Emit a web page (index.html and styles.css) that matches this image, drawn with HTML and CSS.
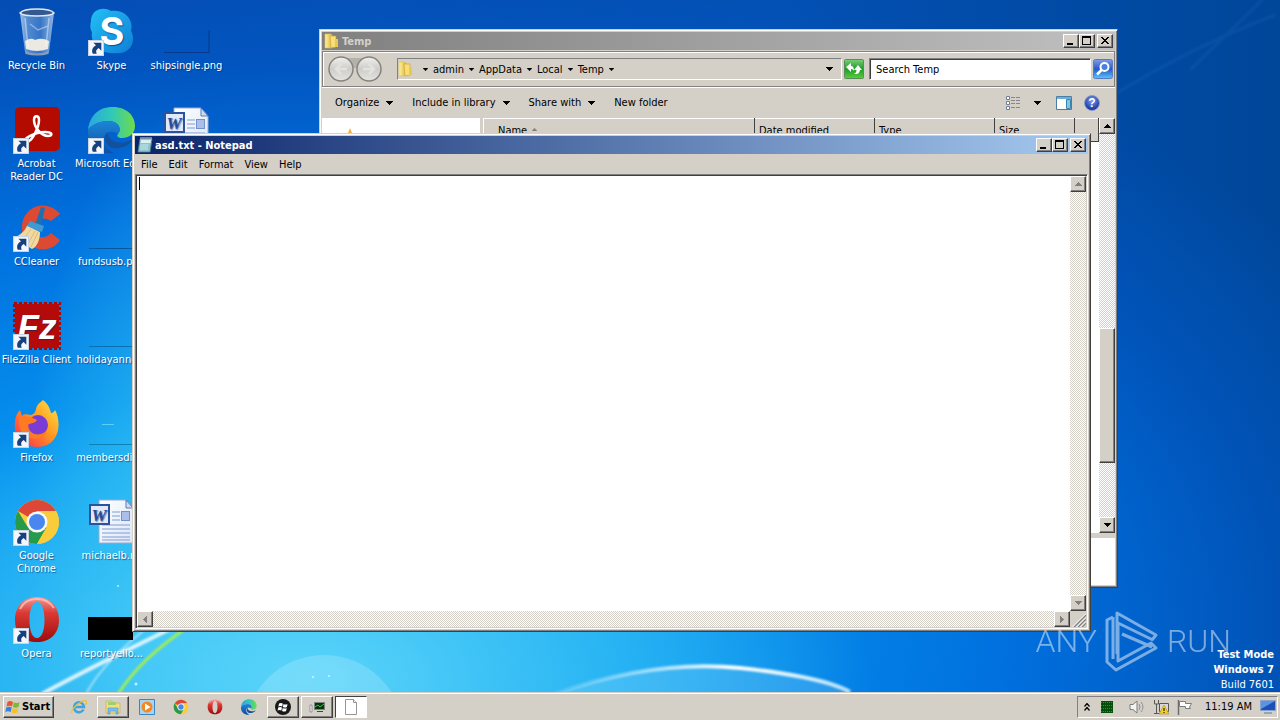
FILE: index.html
```html
<!DOCTYPE html>
<html lang="en">
<head>
<meta charset="utf-8">
<title>asd.txt - Notepad</title>
<link rel="stylesheet" href="styles.css">
</head>
<body>
<svg class="defs" aria-hidden="true">
  <defs>
    <linearGradient id="gGlass" x1="0" x2="1"><stop offset="0" stop-color="#b9d3ee"/><stop offset=".25" stop-color="#5c93d6"/><stop offset=".6" stop-color="#3f7bc8"/><stop offset="1" stop-color="#a9c9ec"/></linearGradient>
    <linearGradient id="gSkype" x1="0" y1="0" x2="1" y2="1"><stop offset="0" stop-color="#22c0f5"/><stop offset="1" stop-color="#0f7fd6"/></linearGradient>
    <linearGradient id="gEdge" x1="0" y1="0" x2="1" y2="0"><stop offset="0" stop-color="#2aa7e0"/><stop offset=".5" stop-color="#30c8b8"/><stop offset="1" stop-color="#6fdc4a"/></linearGradient>
    <linearGradient id="gEdge2" x1="0" y1="0" x2="0" y2="1"><stop offset="0" stop-color="#1c86d8"/><stop offset="1" stop-color="#0f4fa0"/></linearGradient>
    <linearGradient id="gFire" x1="1" y1="0" x2="0" y2="1"><stop offset="0" stop-color="#ffe84a"/><stop offset=".45" stop-color="#ff9a20"/><stop offset=".8" stop-color="#ff4a45"/><stop offset="1" stop-color="#e8258a"/></linearGradient>
    <linearGradient id="gOpera" x1="0" y1="0" x2="0" y2="1"><stop offset="0" stop-color="#f49a94"/><stop offset=".35" stop-color="#dc3a34"/><stop offset="1" stop-color="#9c0c0c"/></linearGradient>
    <linearGradient id="gFolder" x1="0" x2="1"><stop offset="0" stop-color="#fff3a0"/><stop offset="1" stop-color="#dcb638"/></linearGradient>
    <linearGradient id="gBall" x1="0" y1="0" x2="0" y2="1"><stop offset="0" stop-color="#f0f0ee"/><stop offset=".5" stop-color="#cfcdc9"/><stop offset="1" stop-color="#e6e4e0"/></linearGradient>
    <linearGradient id="gGreen" x1="0" y1="0" x2="0" y2="1"><stop offset="0" stop-color="#7ccf78"/><stop offset=".5" stop-color="#1f9a28"/><stop offset="1" stop-color="#58d03c"/></linearGradient>
    <linearGradient id="gBlue" x1="0" y1="0" x2="0" y2="1"><stop offset="0" stop-color="#7f9fe8"/><stop offset=".5" stop-color="#2458c8"/><stop offset="1" stop-color="#58c8f8"/></linearGradient>
    <linearGradient id="gPage" x1="0" y1="0" x2="1" y2="1"><stop offset="0" stop-color="#ffffff"/><stop offset="1" stop-color="#dbe6f8"/></linearGradient>
    <radialGradient id="gHelp" cx=".5" cy=".35" r=".6"><stop offset="0" stop-color="#7d9ff0"/><stop offset="1" stop-color="#17339c"/></radialGradient>
    <linearGradient id="gArc" x1="0" x2="1"><stop offset="0" stop-color="#bfeaff" stop-opacity=".2"/><stop offset=".6" stop-color="#fff"/><stop offset="1" stop-color="#dff6ff" stop-opacity=".8"/></linearGradient>
    <filter id="soft" x="-20%" y="-20%" width="140%" height="140%"><feGaussianBlur stdDeviation="1"/></filter>
  </defs>
  <symbol id="shortcut" viewBox="0 0 15 15"><rect width="15" height="15" fill="#c8d4e4"/><rect x="1" y="1" width="13" height="13" fill="#f4f7fb"/><path d="M5 2.500h7.500V10L10 7.600C7.700 9 7 10.500 8.200 13H4.500C3 9.500 4.500 6.500 7.500 5z" fill="#17407c"/></symbol>
  <symbol id="word" viewBox="0 0 48 48"><path d="M11 2h27l7 8v35H11z" fill="url(#gPage)" stroke="#9aaccc"/><path d="M38 2v8h7z" fill="#cfdcf0" stroke="#5c7cb8"/><path d="M24 14h8M24 18h8M24 22h8M14 27h28M14 31h28M14 35h28M14 39h28M14 42h28" stroke="#7f9dd4"/><rect x="33.500" y="13.500" width="8" height="9" fill="#a9bfe8" stroke="#7390cc"/><rect x="2" y="7" width="19" height="19" fill="#dfe9fa" stroke="#2b539c" stroke-width="2"/><text x="11" y="23" text-anchor="middle" class="word-letter">W</text></symbol>
  <symbol id="chrome" viewBox="0 0 48 48"><circle cx="24" cy="24" r="22" fill="#f9cc3c"/><path d="M24 24 5 13A22 22 0 0 1 43 13H24z" fill="#dd4738"/><path d="M5 13A22 22 0 0 0 24 46L33.500 29.500 24 24 14 28z" fill="#279a4c"/><path d="M24 13h19A22 22 0 0 1 24 46l9.500-16.500z" fill="#f9cc3c"/><circle cx="24" cy="24" r="10.500" fill="#f8f8f8"/><circle cx="24" cy="24" r="8" fill="#4886f0"/></symbol>
  <symbol id="opera" viewBox="0 0 48 48"><path fill-rule="evenodd" d="M24 1C37 1 46 10 46 24S37 46 24 46 2 38 2 24 11 1 24 1zM24 6c-5 0-7.500 8-7.500 18S19 42 24 42s7.500-8 7.500-18S29 6 24 6z" fill="url(#gOpera)"/><path d="M7 13C11 5 17 3 24 3s13 3 17 9" stroke="#ffd0c8" stroke-opacity=".7" stroke-width="2" fill="none"/></symbol>
  <symbol id="edge" viewBox="0 0 48 48"><path d="M0 24C2 8 12 1 25 1c14 0 22 9 22 19 0 8-6 12-13 12-4 0-6-2-4-4 5-6-1-13-9-13C10 15 2 20 0 24z" fill="url(#gEdge)"/><path d="M0 24c3-5 11-9 21-9 8 0 14 7 9 13-10-7-19 3-12 13 2 3 5 5 8 6C10 49-1 39 0 24z" fill="url(#gEdge2)"/><path d="M19 26c-6 10 4 20 16 15 4-1 7-4 8-5 1-1 0-2-2-1-11 5-21-1-22-9z" fill="#14509c"/></symbol>
  <symbol id="folder" viewBox="0 0 16 16"><path d="M1 1h6l1 1v13H1z" fill="url(#gFolder)" stroke="#e0c050" stroke-width=".6"/><path d="M6 3h6v11l-5 1z" fill="#f7df78" stroke="#c8a030" stroke-width=".6"/><path d="M11 6h3v8h-3z" fill="#e8c850"/></symbol>
  <symbol id="flag4" viewBox="0 0 16 16"><path d="M2.500 3C4.500 1.500 6 2 8 3L7 7.500C5 6.500 3.500 6.500 1.500 7.500z" fill="#e8562c"/><path d="M8.800 3.200c2 1 3.500 1 5.700 0l-1 4.800c-2 1-3.500 1-5.600 0z" fill="#7cb83c"/><path d="M1.300 8.500c2-1 3.500-1 5.400 0l-1 4.500c-2-1-3.500-1-5.400 0z" fill="#3c80d8"/><path d="M7.700 8.900c2 1 3.500 1 5.600 0l-1 4.500c-2 1-3.500 1-5.600 0z" fill="#f8c020"/></symbol>
  <symbol id="up" viewBox="0 0 7 4"><path d="M3 0h1v1h1v1h1v1h1v1H0V3h1V2h1V1h1z" fill="currentColor"/></symbol>
  <symbol id="down" viewBox="0 0 7 4"><path d="M0 0h7v1H6v1H5v1H4v1H3V3H2V2H1V1H0z" fill="currentColor"/></symbol>
  <symbol id="left" viewBox="0 0 4 7"><path d="M0 3h1V2h1V1h1V0h1v7H3V6H2V5H1V4H0z" fill="currentColor"/></symbol>
  <symbol id="right" viewBox="0 0 4 7"><path d="M4 3H3V2H2V1H1V0H0v7h1V6h1V5h1V4h1z" fill="currentColor"/></symbol>
  <symbol id="min" viewBox="0 0 12 10"><path d="M2 7h6v2H2z" fill="#000"/></symbol>
  <symbol id="max" viewBox="0 0 12 10"><path fill-rule="evenodd" d="M1 0h9v9H1zM2 2v6h7V2z" fill="#000"/></symbol>
  <symbol id="close" viewBox="0 0 12 10"><path d="M2 1h2v1h1v1h2V2h1V1h2v1H9v1H8v1H7v1h1v1h1v1h1v1H8V7H7V6H5v1H4v1H2V7h1V6h1V5h1V4H4V3H3V2H2z" fill="#000"/></symbol>
</svg>

<div class="screen">
  <main class="desktop">
    <svg class="streaks" viewBox="0 0 1280 692" preserveAspectRatio="none" aria-hidden="true">
      <circle cx="324" cy="735" r="80" fill="#d8f6ff" fill-opacity=".22"/>
      <path d="M555 694C640 664 700 664 740 668S830 680 850 692z" fill="#aee6ff" fill-opacity=".2"/>
      <g fill="none" filter="url(#soft)">
        <path d="M42 694C100 662 150 640 215 606" stroke="#fff" stroke-opacity=".8" stroke-width="4"/>
        <path d="M86 694C100 668 120 650 150 625" stroke="#fff" stroke-opacity=".5" stroke-width="2"/>
        <path d="M118 694C135 668 155 650 186 628" stroke="#a4ee50" stroke-width="3"/>
        <path d="M555 694C640 664 700 664 740 668S830 680 850 692" stroke="url(#gArc)" stroke-width="4"/>
        <path d="M1060 130C1130 80 1210 40 1275 15M1190 70 1262 0" stroke="#6fb4f0" stroke-opacity=".08" stroke-width="3"/>
      </g>
      <g fill="#fff" fill-opacity=".7"><circle cx="136" cy="684" r="1.500"/><circle cx="118" cy="586" r="1"/><circle cx="313" cy="677" r="1"/><circle cx="329" cy="676" r="1"/></g>
    </svg>

    <div class="icons">
      <a class="icon" href="#"><svg viewBox="0 0 48 48"><path d="M7 5h34l-5 39q-12 5-24 0z" fill="url(#gGlass)" fill-opacity=".85"/><path d="M12 33q6-4 10-1 7-3 14 1l-1 8q-11 4-22 0z" fill="#ece8e2"/><path d="M7 5q3-4 17-4t17 4q-3 3-17 3T7 5z" fill="#35598f" stroke="#dfe8f2" stroke-width="1.500"/><path d="M12 43q12 5 24 0l-.5 3q-11 3-23 0z" fill="#8c9cb4"/><path d="M12 10l3 30M36 10l-3 28M17 16l8 6 10-4" stroke="#fff" stroke-opacity=".4" stroke-width="1.500" fill="none"/></svg><span>Recycle Bin</span></a>
      <a class="icon" href="#"><svg viewBox="0 0 48 48"><path d="M3 13C3 2 15-2 23 3c14-2 23 9 20 20 5 8 1 24-15 22C13 47 2 36 4 24c-2-3-2-7-1-11z" fill="url(#gSkype)"/><text x="24" y="37" text-anchor="middle" class="skype-letter">S</text><use href="#shortcut" x="0" y="32" width="16" height="16"/></svg><span>Skype</span></a>
      <a class="icon thumb" href="#"><svg viewBox="0 0 48 48"><path d="M1 44.500h45V22" stroke="#06398c" fill="none"/></svg><span>shipsingle.png</span></a>

      <a class="icon" href="#"><svg viewBox="0 0 48 48"><rect x="2" y="1" width="45" height="44" rx="5" fill="#b30b00"/><path d="M12 36c-3-3 10-10 20-10 8 0 8 4 3 4-7 0-14-9-14-16 0-5 5-5 5 0 0 7-6 19-10 21-2 2-3 2-4 1z" fill="none" stroke="#fff" stroke-width="2.500"/><use href="#shortcut" x="0" y="32" width="16" height="16"/></svg><span>Acrobat Reader DC</span></a>
      <a class="icon" href="#"><svg viewBox="0 0 48 48"><use href="#edge"/><use href="#shortcut" x="0" y="32" width="16" height="16"/></svg><span class="oneline">Microsoft Edge</span></a>
      <a class="icon" href="#"><svg viewBox="0 0 48 48"><use href="#word"/></svg></a>

      <a class="icon" href="#"><svg viewBox="0 0 48 48"><path d="M47 10 38 17C30 11 20 16 20 25c1 9 12 11 18 4l9 7C38 52 9 47 9 24 9 2 34-6 47 10z" fill="#dc4a34"/><path d="M28 3l4 1-4 18-6-1z" fill="#1f6fb4"/><path d="M17 17l14 5-2 6-16-5z" fill="#3f9ad4"/><path d="M14 22l13 6c0 8-3 15-8 17L1 34c6-3 11-7 13-12z" fill="#f3d9a0"/><path d="M18 25 9 37M22 27l-7 13M25 28l-7 15" stroke="#d8bc84"/><use href="#shortcut" x="0" y="32" width="16" height="16"/></svg><span>CCleaner</span></a>
      <a class="icon thumb" href="#"><svg viewBox="0 0 48 48"><path d="M1 44.500h46" stroke="#06589c"/></svg><span>fundsusb.png</span></a>
      <i class="icon"></i>

      <a class="icon" href="#"><svg viewBox="0 0 48 48"><rect x="2" y="2" width="44" height="44" fill="#b40a0a"/><rect x="1" y="1" width="46" height="46" fill="none" stroke="#a80808" stroke-width="2" stroke-dasharray="3 2"/><text x="24" y="37" text-anchor="middle" class="fz-letter">Fz</text><use href="#shortcut" x="0" y="32" width="16" height="16"/></svg><span>FileZilla Client</span></a>
      <a class="icon thumb" href="#"><svg viewBox="0 0 48 48"><path d="M1 44.500h46" stroke="#0670b0"/></svg><span>holidayanno...</span></a>
      <i class="icon"></i>

      <a class="icon" href="#"><svg viewBox="0 0 48 48"><path d="M30 0c6 5 7 9 8 13 2 0 3-1 4-3 7 12 5 37-18 37C9 47 0 37 2 22c0-5 2-9 5-12l2 6c3-3 6-1 9-1 4-1 5-5 5-6 1-5 4-6 7-9z" fill="url(#gFire)"/><circle cx="25" cy="25" r="10" fill="#7a3cd4"/><path d="M6 18c8-4 13 0 18 2-2 4-8 3-9 5 0 10 11 12 19 6-5 12-25 10-28-5z" fill="#ff7a22"/><use href="#shortcut" x="0" y="32" width="16" height="16"/></svg><span>Firefox</span></a>
      <a class="icon thumb" href="#"><svg viewBox="0 0 48 48"><path d="M1 44.500h46" stroke="#0a82b4"/><path d="M14 24.500h12" stroke="#5cd0f4"/></svg><span>membersdis...</span></a>
      <i class="icon"></i>

      <a class="icon" href="#"><svg viewBox="0 0 48 48"><use href="#chrome"/><use href="#shortcut" x="0" y="32" width="16" height="16"/></svg><span>Google Chrome</span></a>
      <a class="icon" href="#"><svg viewBox="0 0 48 48"><use href="#word"/></svg><span>michaelb.rtf</span></a>
      <i class="icon"></i>

      <a class="icon" href="#"><svg viewBox="0 0 48 48"><use href="#opera"/><use href="#shortcut" x="0" y="32" width="16" height="16"/></svg><span>Opera</span></a>
      <a class="icon thumb" href="#"><svg viewBox="0 0 48 48"><path d="M0 21h45v23H0z" fill="#000"/></svg><span>reportyello...</span></a>
    </div>

    <section class="window explorer" aria-label="Temp">
      <header class="caption inactive">
        <svg class="i16" viewBox="0 0 16 16"><use href="#folder"/></svg>
        <h2>Temp</h2>
        <button class="cbtn" aria-label="Minimize"><svg viewBox="0 0 12 10"><use href="#min"/></svg></button>
        <button class="cbtn" aria-label="Maximize"><svg viewBox="0 0 12 10"><use href="#max"/></svg></button>
        <button class="cbtn last" aria-label="Close"><svg viewBox="0 0 12 10"><use href="#close"/></svg></button>
      </header>
      <div class="nav">
        <svg class="balls" viewBox="0 0 56 28"><path d="M12 3h30v10H12z" fill="#b4b1ab"/><g fill="url(#gBall)" stroke="#85837f" stroke-width="1.500"><circle cx="14" cy="14" r="12"/><circle cx="42" cy="14" r="12"/></g><path d="M20 14H9m5-5-5 5 5 5M36 14h11m-5-5 5 5-5 5" fill="none" stroke="#e4e2de" stroke-width="2.500"/></svg>
        <div class="address">
          <svg class="i16" viewBox="0 0 16 16"><use href="#folder"/></svg>
          <svg class="tick first" viewBox="0 0 7 4"><use href="#down"/></svg><span>admin</span>
          <svg class="tick" viewBox="0 0 7 4"><use href="#down"/></svg><span>AppData</span>
          <svg class="tick" viewBox="0 0 7 4"><use href="#down"/></svg><span>Local</span>
          <svg class="tick" viewBox="0 0 7 4"><use href="#down"/></svg><span>Temp</span>
          <svg class="tick" viewBox="0 0 7 4"><use href="#down"/></svg>
          <svg class="drop" viewBox="0 0 7 4"><use href="#down"/></svg>
        </div>
        <button class="tool" aria-label="Refresh"><svg viewBox="0 0 20 20"><rect x=".5" y=".5" width="19" height="19" rx="1" fill="url(#gGreen)" stroke="#5c8c5c"/><path d="M2 8l5-4v3q3 0 3 5-1-2-3-2v3zM18 11l-4-5-4 5h2.500q0 3-2.500 3.500 5 2 6-3.500z" fill="#fff"/></svg></button>
        <input class="search" type="text" value="Search Temp" aria-label="Search Temp">
        <button class="tool" aria-label="Search"><svg viewBox="0 0 20 20"><rect x=".5" y=".5" width="19" height="19" rx="2" fill="url(#gBlue)" stroke="#5c78c0"/><circle cx="11.500" cy="8" r="4" fill="#4c80dc" stroke="#fff" stroke-width="2"/><path d="M8.500 11 4 15.500" stroke="#fff" stroke-width="2.500"/></svg></button>
      </div>
      <div class="toolbar">
        <button>Organize <svg class="drop" viewBox="0 0 7 4"><use href="#down"/></svg></button>
        <button>Include in library <svg class="drop" viewBox="0 0 7 4"><use href="#down"/></svg></button>
        <button>Share with <svg class="drop" viewBox="0 0 7 4"><use href="#down"/></svg></button>
        <button>New folder</button>
        <button class="views" aria-label="Change view"><svg class="i16" viewBox="0 0 16 16"><g fill="#fff" stroke="#70809c"><path d="M1.500 1.500h3v3h-3zM1.500 6.500h3v3h-3zM1.500 11.500h3v3h-3z"/></g><path d="M6 2.500h4m1 0h4M6 5.500h4m1 0h4M6 8.500h4m1 0h4M6 12.500h4m1 0h4" stroke="#84888c"/></svg><svg class="drop" viewBox="0 0 7 4"><use href="#down"/></svg></button>
        <button aria-label="Show the preview pane"><svg class="i16" viewBox="0 0 16 14"><path d="M.5.500h15v13H.5z" fill="#fff" stroke="#4c7ca4"/><path d="M1 1h14v2H1z" fill="#6cb0d8"/><path d="M10.500 3.500h4v9h-4z" fill="#7cc8e4" stroke="#3c84b0"/></svg></button>
        <button aria-label="Help"><svg class="i16" viewBox="0 0 16 16"><circle cx="8" cy="8" r="7.500" fill="url(#gHelp)" stroke="#8c9cc8"/><text x="8" y="12" text-anchor="middle" class="help-letter">?</text></svg></button>
      </div>
      <div class="files">
        <div class="tree"><svg class="i16" viewBox="0 0 16 16"><path d="m8 0 2 5h6l-5 4 2 6-5-4-5 4 2-6-5-4h6z" fill="#f4b040"/></svg></div>
        <div class="list">
          <table><thead><tr><th class="name">Name <svg viewBox="0 0 7 4"><use href="#up"/></svg></th><th>Date modified</th><th>Type</th><th class="size">Size</th><th class="rest"></th></tr></thead></table>
        </div>
        <div class="vbar">
          <button aria-label="Scroll up"><svg class="v" viewBox="0 0 7 4"><use href="#up"/></svg></button>
          <div class="track"><div class="thumbbar"></div></div>
          <button aria-label="Scroll down"><svg class="v" viewBox="0 0 7 4"><use href="#down"/></svg></button>
        </div>
      </div>
      <div class="details"></div>
    </section>

    <section class="window notepad" aria-label="asd.txt - Notepad">
      <header class="caption">
        <svg class="i16" viewBox="0 0 16 16"><path d="M3 2h12l-2 13H1z" fill="#8cc4cc" stroke="#4c8490" stroke-width=".8"/><path d="M4 3h10l-.5 3H3.500z" fill="#d8f0f0"/><path d="M3.500 8h8M3 10h8M3 12h8" stroke="#c4e8ec"/><path d="M4 0v3M6 0v3M8 0v3M10 0v3M12 0v3M14 0v3" stroke="#d4d4cc"/></svg>
        <h1>asd.txt - Notepad</h1>
        <button class="cbtn" aria-label="Minimize"><svg viewBox="0 0 12 10"><use href="#min"/></svg></button>
        <button class="cbtn" aria-label="Maximize"><svg viewBox="0 0 12 10"><use href="#max"/></svg></button>
        <button class="cbtn last" aria-label="Close"><svg viewBox="0 0 12 10"><use href="#close"/></svg></button>
      </header>
      <nav class="menu"><button>File</button><button>Edit</button><button>Format</button><button>View</button><button>Help</button></nav>
      <div class="editor">
        <textarea aria-label="Text"></textarea>
        <i class="caret"></i>
        <div class="vbar off">
          <button aria-label="Scroll up"><svg class="v" viewBox="0 0 7 4"><use href="#up"/></svg></button>
          <div class="track"></div>
          <button aria-label="Scroll down"><svg class="v" viewBox="0 0 7 4"><use href="#down"/></svg></button>
        </div>
        <div class="hbar off">
          <button aria-label="Scroll left"><svg class="h" viewBox="0 0 4 7"><use href="#left"/></svg></button>
          <div class="track"></div>
          <button aria-label="Scroll right"><svg class="h" viewBox="0 0 4 7"><use href="#right"/></svg></button>
        </div>
        <svg class="grip" viewBox="0 0 16 16"><path d="M4 16 16 4M8 16l8-8M12 16l4-4" stroke="#808080" stroke-width="1.500"/><path d="M2.500 16 16 2.500M6.500 16 16 6.500M10.500 16l5.500-5.500" stroke="#fff"/></svg>
      </div>
    </section>

    <div class="watermark"><span>ANY</span><svg viewBox="0 0 54 62"><g fill="none" stroke="#fff" stroke-width="3" stroke-linejoin="round"><path d="M8 7 2 10v42l9 8 40-22-5-5-33 18V13l35 17"/><path d="M8 7v42M12 44V3l39 22-4 5M17 24l30 13"/></g></svg><span>RUN</span></div>
    <div class="build"><b>Test Mode</b><b>Windows 7</b><span>Build 7601</span></div>
  </main>

  <footer class="taskbar">
    <button class="start"><svg viewBox="0 0 16 16"><use href="#flag4"/></svg>Start</button>
    <div class="tasks">
      <button aria-label="Internet Explorer"><svg viewBox="0 0 16 16"><path d="M12.500 10.500A5 5 0 1 1 13 8H4" fill="none" stroke="#3ca4e4" stroke-width="2.500"/><path d="M1 14C-1 10 12 0 15 2c1 1 0 3-1 4" fill="none" stroke="#f0c030" stroke-width="1.200"/></svg></button>
      <button class="raised" aria-label="Windows Explorer"><svg viewBox="0 0 16 16"><path d="M1 2h6l1 2h7v10H1z" fill="#f4dc84" stroke="#c8a848" stroke-width=".6"/><path d="M3 3h8v3H3z" fill="#98d468"/><path d="M3 9h10v6h-2v-3H5v3H3z" fill="#7cc0ec" stroke="#4c94cc" stroke-width=".6"/></svg></button>
      <button aria-label="Media Player"><svg viewBox="0 0 16 16"><path d="M.5.500h15v15H.5z" fill="#a8d4f4" stroke="#3c84c8"/><circle cx="8" cy="8" r="5.500" fill="#f48820"/><path d="M6 4.500v7l5.500-3.500z" fill="#fff"/></svg></button>
      <button aria-label="Chrome"><svg viewBox="0 0 48 48"><use href="#chrome"/></svg></button>
      <button aria-label="Opera"><svg viewBox="0 0 48 48"><use href="#opera"/></svg></button>
      <button aria-label="Edge"><svg viewBox="0 0 48 48"><use href="#edge"/></svg></button>
      <button class="raised" aria-label="Windows"><svg viewBox="0 0 16 16"><circle cx="8" cy="8" r="8" fill="#181818"/><path d="M4 4.500q2-1 3.800 0l-.6 3q-2-1-3.800 0zM8.500 5q2 1 4 0l-.6 3q-2 1-4 0zM3.200 8.500q2-1 3.800 0l-.6 3q-2-1-3.800 0zM7.700 9q2 1 4 0l-.6 3q-2 1-4 0z" fill="#fff"/></svg></button>
      <button class="raised" aria-label="System monitor"><svg viewBox="0 0 16 16"><path d="M5 3h11v8H5z" fill="#7c8484"/><path d="M6 4h9v6H6z" fill="#04320c"/><path d="m6 8 3-2 2 2 4-3" stroke="#2cc83c" fill="none"/><path d="M8 12h6v1H8z" fill="#444"/><path d="M1 6h2v7H1z" fill="#eee" stroke="#667" stroke-width=".6"/></svg></button>
      <button class="pressed" aria-label="asd.txt - Notepad"><svg viewBox="0 0 16 16"><path d="M2.500.500h8l3 3v12h-11z" fill="#fff" stroke="#949494"/><path d="M10.500.500v3h3" fill="#eee" stroke="#949494"/></svg></button>
    </div>
    <div class="tray">
      <svg class="chev" viewBox="0 0 6 8"><path d="m.5 3.500 2.500-3 2.500 3m-5 4 2.500-3 2.500 3" fill="none" stroke="#000" stroke-width="1.200"/></svg>
      <svg class="cpu" viewBox="0 0 12 12"><path d="M0 0h12v12H0z" fill="#04500a"/><path d="M0 1.500h12M0 4.500h12M0 7.500h12M0 10.500h12" stroke="#18a028" stroke-dasharray="1 1"/></svg>
      <svg class="i16" viewBox="0 0 16 16"><path d="M1 5.500h3L8 2v12l-4-3.500H1z" fill="#f4f4f4" stroke="#7c7c7c"/><path d="M10 5q2 3 0 6M12 3q4 5 0 10" fill="none" stroke="#909090"/></svg>
      <svg class="i16" viewBox="0 0 16 16"><path d="M6.500 4.500h9v8h-9z" fill="#d8d8d8" stroke="#585858"/><path d="M1.500 1v4h4V1M3.500 5v10M1 14.500h6" fill="none" stroke="#585858"/><path d="m11 6 5 9H6z" fill="#f8d020" stroke="#b08c10" stroke-width=".6"/><path d="M11 9v3m0 1v1" stroke="#000"/></svg>
      <svg class="i16" viewBox="0 0 16 16"><path d="M1.500 1v15" stroke="#6c6c6c" stroke-width="1.500"/><path d="M2.500 2.500h6v2h6l-2 3.500 1 1.500h-5v-2h-6z" fill="#fff" stroke="#7c7c7c"/></svg>
      <time>11:19 AM</time>
      <svg class="i16" viewBox="0 0 16 14"><path d="M.5.500h15v10H.5z" fill="#1c50b8" stroke="#8ca4cc"/><path d="M1 1h14L1 9z" fill="#5c94e4"/><path d="M4 12h8v2H4z" fill="#94a4b8"/></svg>
    </div>
  </footer>
</div>
</body>
</html>
```

FILE: styles.css
```css
:root {
  --face: #d4d0c8;
  --light: #ffffff;
  --shade: #808080;
  --dark: #404040;
}

* { box-sizing: border-box; }

body {
  margin: 0;
  font: 11px/13px "DejaVu Sans Condensed", "Noto Sans", sans-serif;
  color: #000;
}

button {
  margin: 0;
  padding: 0;
  border: 0;
  background: none;
  color: inherit;
  font: inherit;
}

svg { display: block; flex: none; }
.defs { position: absolute; width: 0; height: 0; }
.i16 { width: 16px; height: 16px; }

.screen {
  display: flex;
  flex-direction: column;
  height: 100vh;
  overflow: hidden;
}

/* Desktop */
.desktop {
  position: relative;
  flex: 1;
  min-height: 0;
  overflow: hidden;
  background:
    radial-gradient(ellipse 44% 42% at 24% 98%, rgba(95, 215, 250, .95), rgba(60, 196, 245, .7) 50%, rgba(40, 180, 245, 0)),
    radial-gradient(ellipse 12% 60% at 14% 76%, rgba(60, 205, 245, .7), rgba(40, 180, 245, 0)),
    radial-gradient(ellipse 95% 100% at 22% 90%, #14acf4 0, #0695f0 30%, #0070de 60%, rgba(0, 90, 200, .6) 82%, rgba(0, 72, 168, 0)),
    linear-gradient(90deg, #0549ae, #0350b4 60%, #00479a);
}
.streaks { position: absolute; inset: 0; width: 100%; height: 100%; }

.icons {
  position: relative;
  display: grid;
  grid-template-columns: repeat(3, 75px);
  grid-auto-rows: 98px;
  padding-top: 8px;
}
.icon {
  display: flex;
  flex-direction: column;
  align-items: center;
  gap: 3px;
  padding-right: 2px;
  color: #fff;
  text-align: center;
  text-decoration: none;
  text-shadow: 1px 1px 1px rgba(0, 40, 100, .6);
}
.icon svg { width: 48px; height: 48px; }
.oneline { white-space: nowrap; }
.skype-letter { font: bold 38px Inter, sans-serif; fill: #fff; }
.word-letter { font: italic bold 17px "Liberation Serif", serif; fill: #234c9c; }
.fz-letter { font: italic bold 35px "Liberation Sans", sans-serif; fill: #fff; }
.help-letter { font: bold 12px "Liberation Sans", sans-serif; fill: #fff; }

/* Windows */
.window {
  position: absolute;
  display: flex;
  flex-direction: column;
  padding: 2px;
  background: var(--face);
  border: 1px solid;
  border-color: var(--face) var(--dark) var(--dark) var(--face);
  box-shadow: inset 1px 1px var(--light), inset -1px -1px var(--shade);
}
.explorer { left: 319px; right: 162px; top: 29px; bottom: 104px; }
.notepad { left: 132px; right: 189px; top: 133px; bottom: 60px; }

.caption {
  display: flex;
  align-items: center;
  height: 18px;
  margin-bottom: 1px;
  padding: 0 2px;
  background: linear-gradient(90deg, #0a246a, #a6caf0);
  color: #fff;
}
.caption.inactive { background: linear-gradient(90deg, #808080, #c0c0c0); color: #d4d0c8; }
.caption h1, .caption h2 { flex: 1; margin: 0 0 0 2px; font-size: 11px; line-height: 13px; }

.cbtn, .vbar button, .hbar button, .thumbbar, .start, .raised {
  background: var(--face);
  border: 1px solid;
  border-color: var(--light) var(--dark) var(--dark) var(--light);
  box-shadow: inset -1px -1px var(--shade);
}
.cbtn { width: 16px; height: 14px; padding: 1px; }
.cbtn svg { width: 12px; height: 10px; }
.cbtn.last { margin-left: 2px; }

.nav {
  display: flex;
  align-items: center;
  height: 36px;
  padding: 0 1px 0 4px;
  border: 1px solid var(--shade);
  box-shadow: inset 1px 1px var(--light), 0 1px var(--light);
}
.balls { width: 56px; height: 28px; }
.address {
  display: flex;
  flex: 1;
  align-items: center;
  height: 22px;
  margin: 0 2px 0 14px;
  border: 1px solid;
  border-color: var(--shade) var(--light) var(--light) var(--shade);
}
.tick { width: 5px; height: 3px; margin: 0 5px; }
.tick.first { margin-left: 9px; }
.drop { width: 7px; height: 4px; }
.address .drop { margin: 0 8px 0 auto; }
.tool { width: 20px; height: 20px; }
.tool svg { width: 20px; height: 20px; }
.search {
  width: 222px;
  height: 22px;
  margin: 0 2px 0 5px;
  padding: 0 6px;
  border: 1px solid;
  border-color: var(--shade) var(--light) var(--light) var(--shade);
  box-shadow: inset 1px 1px var(--dark);
  background: #fff;
  color: #000;
  font: inherit;
}

.toolbar { display: flex; align-items: center; height: 31px; padding: 0 15px 0 13px; }
.toolbar button { display: flex; align-items: center; gap: 7px; margin-right: 19px; }
.toolbar .views { gap: 13px; margin: 0 15px 0 auto; }
.toolbar .views ~ button { margin-right: 12px; }
.toolbar .views ~ button:last-child { margin-right: 0; }

.files { display: flex; flex: 1; min-height: 0; background: #fff; }
.tree { width: 158px; padding: 10px 20px; }
.list { flex: 1; border-left: 3px solid var(--face); }
.list table { width: 100%; border-collapse: collapse; table-layout: fixed; background: var(--face); }
.list th {
  width: 120px;
  height: 23px;
  padding: 0 4px;
  border-top: 1px solid var(--light);
  border-left: 1px solid var(--light);
  border-right: 1px solid var(--dark);
  border-bottom: 1px solid var(--dark);
  font-weight: normal;
  text-align: left;
}
.list .name { width: auto; padding-left: 14px; }
.list .size { width: 80px; }
.list .rest { width: 24px; }
.list th svg { display: inline-block; width: 5px; height: 3px; margin: 0 0 3px 2px; color: var(--shade); }
.details { height: 52px; border-top: 5px solid var(--face); background: #fff; }

/* Scroll bars */
.vbar, .hbar { display: flex; }
.vbar { flex-direction: column; width: 16px; }
.hbar { height: 16px; }
.track {
  display: flex;
  flex: 1;
  flex-direction: column;
  background: repeating-conic-gradient(#fff 0 25%, #d4d0c8 0 50%) 0 0 / 2px 2px;
}
.vbar button, .hbar button {
  display: flex;
  align-items: center;
  justify-content: center;
  width: 16px;
  height: 16px;
}
.v { width: 7px; height: 4px; }
.h { width: 4px; height: 7px; }
.off button { color: var(--shade); }
.thumbbar { height: 41%; margin-top: auto; }
.explorer .track { padding-bottom: 54px; }

/* Notepad */
.menu { display: flex; height: 19px; align-items: center; gap: 11px; padding: 0 6px; }
.editor {
  position: relative;
  display: grid;
  flex: 1;
  grid-template: 1fr 16px / 1fr 16px;
  min-height: 0;
  border: 1px solid;
  border-color: var(--shade) var(--light) var(--light) var(--shade);
  box-shadow: inset 1px 1px var(--dark);
  padding: 1px;
}
.editor textarea {
  width: 100%;
  height: 100%;
  padding: 1px 2px;
  border: 0;
  outline: 0;
  resize: none;
  background: #fff;
  font: 13px/15px "Liberation Mono", monospace;
}
.caret { position: absolute; left: 3px; top: 2px; width: 1px; height: 13px; background: #000; }
.grip { width: 16px; height: 16px; }

/* Screen overlays */
.watermark {
  position: absolute;
  right: 49px;
  bottom: 20px;
  display: flex;
  align-items: center;
  gap: 8px;
  color: #fff;
  opacity: .48;
  font: 300 32px/48px Roboto, sans-serif;
}
.watermark svg { width: 54px; height: 62px; }
.build {
  position: absolute;
  right: 6px;
  bottom: 0;
  display: flex;
  flex-direction: column;
  align-items: flex-end;
  color: #fff;
  line-height: 15px;
}

/* Taskbar */
.taskbar {
  display: flex;
  align-items: center;
  flex: none;
  height: 28px;
  padding: 0 2px 0 3px;
  background: var(--face);
  border-top: 1px solid var(--face);
  box-shadow: inset 0 1px var(--light);
}
.start {
  display: flex;
  align-items: center;
  gap: 1px;
  height: 22px;
  padding: 0 3px 0 1px;
  font-weight: bold;
}
.start svg { width: 16px; height: 16px; }
.tasks { display: flex; gap: 2px; margin-left: 9px; }
.tasks button { display: flex; align-items: center; justify-content: center; width: 32px; height: 22px; }
.tasks svg { width: 16px; height: 16px; }
.tasks .pressed {
  border: 1px solid;
  border-color: var(--dark) var(--light) var(--light) var(--dark);
  background: #fff;
}
.tray {
  display: flex;
  align-items: center;
  gap: 8px;
  height: 22px;
  margin-left: auto;
  padding: 0 1px 0 6px;
  border: 1px solid;
  border-color: var(--shade) var(--light) var(--light) var(--shade);
}
.chev { width: 6px; height: 8px; }
.cpu { width: 12px; height: 12px; margin: 0 8px 0 3px; }
.tray time { margin-left: 4px; }
```
